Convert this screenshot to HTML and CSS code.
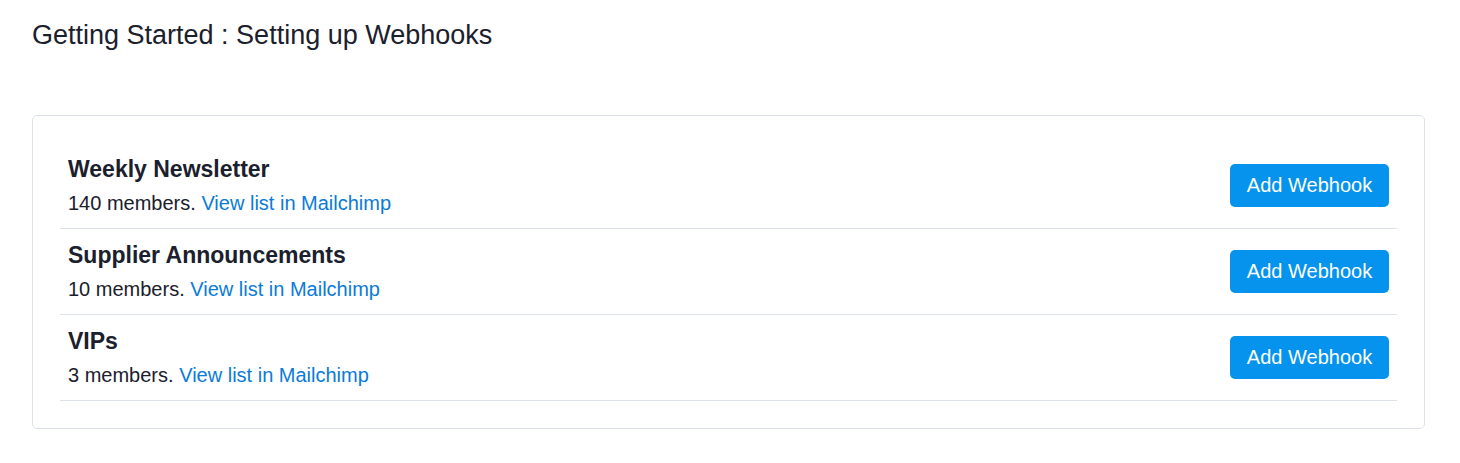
FILE: index.html
```html
<!DOCTYPE html>
<html>
<head>
<meta charset="utf-8">
<link rel="stylesheet" href="styles.css">
</head>
<body>
<div class="page">
  <h1 class="title">Getting Started : Setting up Webhooks</h1>
  <div class="card">
    <div class="row">
      <div class="info">
        <div class="name">Weekly Newsletter</div>
        <div class="meta">140 members. <a class="link" href="#">View list in Mailchimp</a></div>
      </div>
      <button class="btn">Add Webhook</button>
    </div>
    <div class="row">
      <div class="info">
        <div class="name">Supplier Announcements</div>
        <div class="meta">10 members. <a class="link" href="#">View list in Mailchimp</a></div>
      </div>
      <button class="btn">Add Webhook</button>
    </div>
    <div class="row">
      <div class="info">
        <div class="name">VIPs</div>
        <div class="meta">3 members. <a class="link" href="#">View list in Mailchimp</a></div>
      </div>
      <button class="btn">Add Webhook</button>
    </div>
  </div>
</div>
</body>
</html>
```
FILE: styles.css
```css
html, body {
  margin: 0;
  padding: 0;
  background: #ffffff;
  font-family: "Liberation Sans", Arial, sans-serif;
  color: #1a202c;
}
.page {
  padding: 19px 35px 0 32px;
}
.title {
  margin: 0;
  font-size: 27px;
  line-height: 32px;
  font-weight: 400;
  color: #1a202c;
}
.card {
  margin-top: 64px;
  border: 1px solid #dde2ea;
  border-radius: 5px;
  padding: 27px;
}
.row {
  display: flex;
  align-items: center;
  justify-content: space-between;
  padding: 10px 8px 11px 8px;
  border-bottom: 1px solid #dde2ea;
}
.info {
  display: flex;
  flex-direction: column;
  gap: 4px;
}
.name {
  font-size: 23px;
  line-height: 32px;
  font-weight: 700;
  color: #1a202c;
}
.meta {
  font-size: 20px;
  line-height: 28px;
  color: #1a202c;
}
.link {
  color: #0a7bd7;
  text-decoration: none;
}
.btn {
  font-family: "Liberation Sans", Arial, sans-serif;
  font-size: 20px;
  line-height: 24px;
  height: 43px;
  width: 159px;
  padding: 0;
  border: none;
  border-radius: 5px;
  background: #0593ee;
  color: #ffffff;
  cursor: pointer;
}
```
